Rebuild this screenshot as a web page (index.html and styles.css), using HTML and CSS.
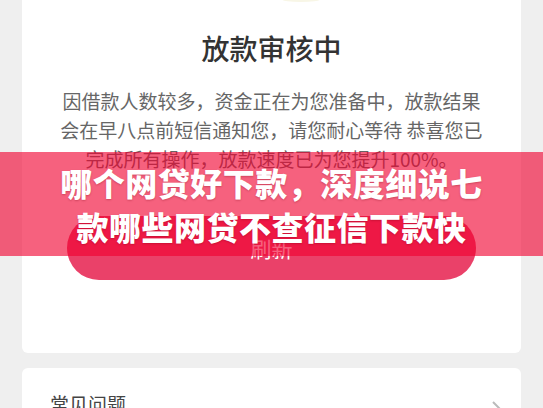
FILE: index.html
```html
<!DOCTYPE html>
<html lang="zh-CN">
<head>
    <meta charset="UTF-8">
    <meta name="viewport" content="width=device-width, initial-scale=1.0">
    <title>放款审核中</title>
    <link rel="stylesheet" href="styles.css">
</head>
<body>
    <div class="page">
        <div class="card status-card">
            <div class="top-icon"></div>
            <h2 class="status-title">放款审核中</h2>
            <p class="status-text">因借款人数较多，资金正在为您准备中，放款结果<br>会在早八点前短信通知您，请您耐心等待 恭喜您已<br>完成所有操作，放款速度已为您提升100%。</p>
            <button class="btn-refresh" type="button">刷新</button>
        </div>
        <div class="card faq-card">
            <span class="faq-label">常见问题</span>
            <svg class="chevron" width="10" height="16" viewBox="0 0 10 16">
                <path d="M2 2 L8 8 L2 14" fill="none" stroke="#bbb" stroke-width="2"/>
            </svg>
        </div>
    </div>
    <div class="banner">
        <div class="banner-text">哪个网贷好下款，深度细说七<br>款哪些网贷不查征信下款快</div>
    </div>
</body>
</html>
```

FILE: styles.css
```css
body {
    margin: 0;
    padding: 0;
    background-color: #efefef;
    font-family: "Noto Sans CJK SC", "Noto Sans", sans-serif;
    height: 408px;
    overflow: hidden;
}
.page {
    padding: 0 22px;
}
.card {
    background-color: #fff;
    border-radius: 6px;
}
.status-card {
    border-radius: 0 0 6px 6px;
    padding: 32px 45px 73px;
    text-align: center;
    position: relative;
}
.top-icon {
    position: absolute;
    top: -3px;
    left: 260px;
    width: 38px;
    height: 5px;
    border-radius: 50%;
    background-color: #f8f6e6;
}
.status-title {
    margin: 0;
    font-size: 28px;
    line-height: 32px;
    font-weight: 500;
    color: #333;
}
.status-text {
    margin: 22px -20px 0;
    font-size: 19px;
    line-height: 29px;
    color: #666;
}
.btn-refresh {
    display: block;
    width: 100%;
    height: 64px;
    margin-top: 43px;
    border: none;
    border-radius: 32px;
    background-color: #ea4169;
    color: #fff;
    font-family: inherit;
    font-size: 21px;
}
.faq-card {
    margin-top: 15px;
    padding: 22px 20px 22px 28px;
    display: flex;
    justify-content: space-between;
    align-items: center;
}
.faq-label {
    font-size: 19px;
    line-height: 28px;
    color: #444;
}
.chevron {
    margin-top: 8px;
}
.banner {
    position: absolute;
    top: 152px;
    left: 0;
    right: 0;
    height: 104px;
    background-color: rgba(240, 0, 47, 0.62);
    display: flex;
    justify-content: center;
    align-items: center;
}
.banner-text {
    color: #fff;
    font-size: 32px;
    line-height: 44px;
    font-weight: 900;
    letter-spacing: 0.5px;
    text-align: center;
    text-shadow: 0 1px 2px rgba(120, 0, 20, 0.3);
}
```
